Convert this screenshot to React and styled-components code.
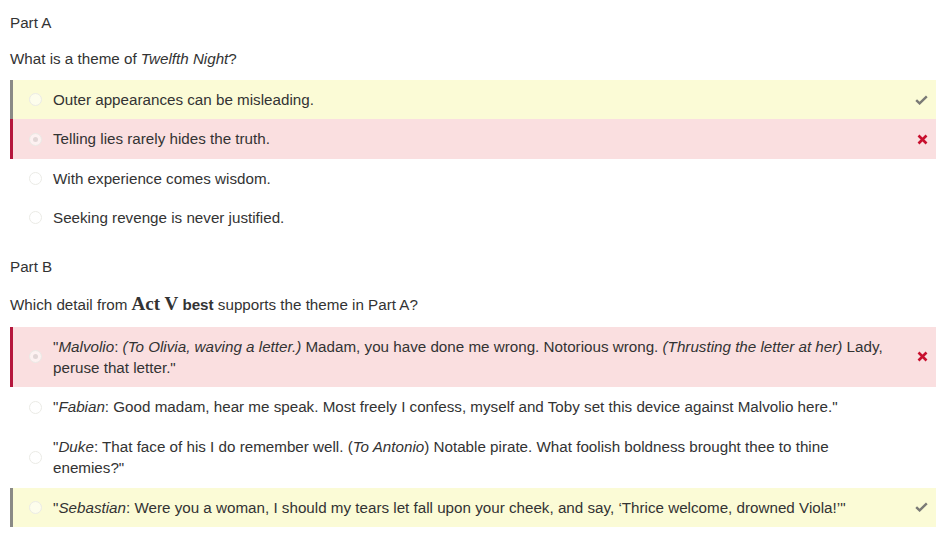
import React from "react";
import styled, { createGlobalStyle } from "styled-components";

const Global = createGlobalStyle`
  html, body { margin: 0; padding: 0; background: #fff; }
  body { font-family: "Liberation Sans", Arial, sans-serif; color: #333; }
`;

const Page = styled.div`
  padding: 12px 10px 10px 10px;
  font-size: 15.2px;
  line-height: 21.43px;
`;

const Part = styled.div`
  margin-top: ${(p) => p.$top || 0}px;
  margin-bottom: ${(p) => p.$bottom || 15}px;
`;

const Question = styled.div`
  margin-bottom: ${(p) => p.$bottom || 11}px;
`;

const Serif = styled.span`
  font-family: "Liberation Serif", "Times New Roman", serif;
  font-size: 19px;
  font-weight: bold;
  line-height: 1;
`;

const List = styled.div`
  display: flex;
  flex-direction: column;
`;

const tones = {
  correct: { bg: "#fbfbd6", bar: "#8a8a86" },
  wrong: { bg: "#fadfe0", bar: "#b5173d" },
  none: { bg: "transparent", bar: "transparent" },
};

const Row = styled.div`
  display: flex;
  align-items: center;
  background: ${(p) => tones[p.$tone].bg};
  border-left: 3px solid ${(p) => tones[p.$tone].bar};
  padding: 9px 0 9px 16px;
`;

const Radio = styled.span`
  flex: none;
  width: 11px;
  height: 11px;
  border-radius: 50%;
  border: 1px solid #ebebe6;
  background: ${(p) => (p.$tone === "none" ? "#fff" : "rgba(255,255,255,0.55)")};
  display: flex;
  align-items: center;
  justify-content: center;
  margin-right: 11px;
  &::after {
    content: "";
    width: 5px;
    height: 5px;
    border-radius: 50%;
    background: ${(p) => (p.$checked ? "#e2d6d6" : "transparent")};
  }
`;

const Text = styled.div`
  flex: 1;
  min-width: 0;
`;

const Mark = styled.div`
  flex: none;
  width: 46px;
  display: flex;
  justify-content: flex-end;
  padding-right: 8px;
  box-sizing: border-box;
`;

const Check = () => (
  <svg width="13" height="10" viewBox="0 0 13 10">
    <path d="M1.2 5.2 L4.6 8.4 L11.8 1.4" fill="none" stroke="#7a7a76" strokeWidth="2.4" />
  </svg>
);

const Cross = () => (
  <svg width="11" height="11" viewBox="0 0 11 11">
    <path d="M1.5 1.5 L9.5 9.5 M9.5 1.5 L1.5 9.5" stroke="#c8102e" strokeWidth="2.6" />
  </svg>
);

const Option = ({ tone = "none", checked, mark, children }) => (
  <Row $tone={tone}>
    <Radio $tone={tone} $checked={checked} />
    <Text>{children}</Text>
    <Mark>{mark === "check" ? <Check /> : mark === "cross" ? <Cross /> : null}</Mark>
  </Row>
);

export default function App() {
  return (
    <>
      <Global />
      <Page>
        <Part>Part A</Part>
        <Question $bottom={10}>
          What is a theme of <i>Twelfth Night</i>?
        </Question>
        <List>
          <Option tone="correct" mark="check">Outer appearances can be misleading.</Option>
          <Option tone="wrong" checked mark="cross">Telling lies rarely hides the truth.</Option>
          <Option>With experience comes wisdom.</Option>
          <Option>Seeking revenge is never justified.</Option>
        </List>
        <Part $top={18} $bottom={17}>Part B</Part>
        <Question>
          Which detail from <Serif>Act V</Serif> <b>best</b> supports the theme in Part A?
        </Question>
        <List>
          <Option tone="wrong" checked mark="cross">
            "<i>Malvolio</i>: <i>(To Olivia, waving a letter.)</i> Madam, you have done me wrong. Notorious
            wrong. <i>(Thrusting the letter at her)</i> Lady, peruse that letter."
          </Option>
          <Option>
            "<i>Fabian</i>: Good madam, hear me speak. Most freely I confess, myself and Toby set this device
            against Malvolio here."
          </Option>
          <Option>
            "<i>Duke</i>: That face of his I do remember well. (<i>To Antonio</i>) Notable pirate. What foolish
            boldness brought thee to thine enemies?"
          </Option>
          <Option tone="correct" mark="check">
            "<i>Sebastian</i>: Were you a woman, I should my tears let fall upon your cheek, and say, ‘Thrice
            welcome, drowned Viola!’"
          </Option>
        </List>
      </Page>
    </>
  );
}
